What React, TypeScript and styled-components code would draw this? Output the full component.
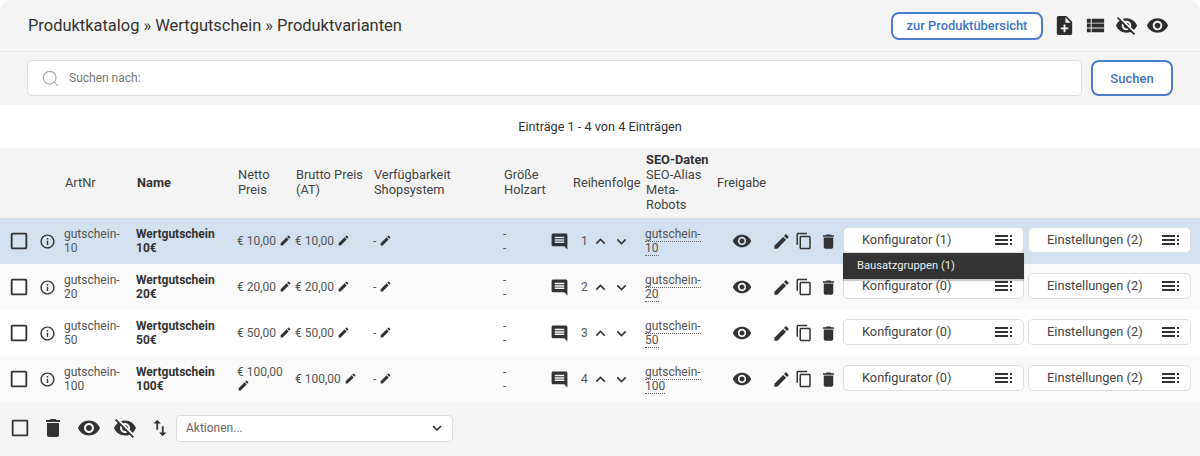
import * as React from "react";
import styled, { createGlobalStyle } from "styled-components";
import { Search } from "lucide-react";
import {
  MdCheckBoxOutlineBlank,
  MdComment,
  MdContentCopy,
  MdDelete,
  MdEdit,
  MdInfoOutline,
  MdKeyboardArrowDown,
  MdKeyboardArrowUp,
  MdNoteAdd,
  MdSwapVert,
  MdViewList,
  MdVisibility,
  MdVisibilityOff,
} from "react-icons/md";

const GlobalStyle = createGlobalStyle`
  html, body { margin: 0; padding: 0; background: #fff; }
  body { font-family: Roboto, "Liberation Sans", sans-serif; color: #333; }
  * { box-sizing: border-box; }
`;

const COLUMNS = "64px 72px 101px 58px 78px 130px 69px 73px 72px 56px 70px 185px 1fr";

const rows = [
  { nr: "10", price: "€ 10,00", pos: 1, konf: 1, tone: "#d3e0ef", open: true },
  { nr: "20", price: "€ 20,00", pos: 2, konf: 0, tone: "#fafafa", open: false },
  { nr: "50", price: "€ 50,00", pos: 3, konf: 0, tone: "#ffffff", open: false },
  { nr: "100", price: "€ 100,00", pos: 4, konf: 0, tone: "#fafafa", open: false },
];

const MenuLines = () => (
  <svg width="18" height="12" viewBox="0 0 18 12" fill="#333">
    <rect x="0" y="1" width="13" height="2" />
    <rect x="0" y="5" width="13" height="2" />
    <rect x="0" y="9" width="13" height="2" />
    <rect x="15" y="1" width="2" height="2" />
    <rect x="15" y="5" width="2" height="2" />
    <rect x="15" y="9" width="2" height="2" />
  </svg>
);

const App = () => {
  return (
    <>
      <GlobalStyle />
      <S.Page>
        <S.Header>
          <S.Title>Produktkatalog » Wertgutschein » Produktvarianten</S.Title>
          <S.HeaderTools>
            <S.OverviewButton>zur Produktübersicht</S.OverviewButton>
            <S.ToolIcons>
              <MdNoteAdd size={23} />
              <MdViewList size={23} />
              <MdVisibilityOff size={23} />
              <MdVisibility size={23} />
            </S.ToolIcons>
          </S.HeaderTools>
        </S.Header>

        <S.SearchBar>
          <S.SearchBox>
            <Search size={19} strokeWidth={1.5} color="#a8a8a8" />
            <span>Suchen nach:</span>
          </S.SearchBox>
          <S.SearchButton>Suchen</S.SearchButton>
        </S.SearchBar>

        <S.Info>Einträge 1 - 4 von 4 Einträgen</S.Info>

        <S.HeadRow>
          <span />
          <S.HeadCell>ArtNr</S.HeadCell>
          <S.HeadCell><b>Name</b></S.HeadCell>
          <S.HeadCell>Netto<br />Preis</S.HeadCell>
          <S.HeadCell>Brutto Preis<br />(AT)</S.HeadCell>
          <S.HeadCell>Verfügbarkeit<br />Shopsystem</S.HeadCell>
          <S.HeadCell>Größe<br />Holzart</S.HeadCell>
          <S.HeadCell>Reihenfolge</S.HeadCell>
          <S.HeadCell><b>SEO-Daten</b><br />SEO-Alias<br />Meta-<br />Robots</S.HeadCell>
          <S.HeadCell>Freigabe</S.HeadCell>
        </S.HeadRow>

        {rows.map((row) => (
          <S.Row key={row.nr} $tone={row.tone}>
            <S.SelectCell>
              <MdCheckBoxOutlineBlank size={22} />
              <MdInfoOutline size={17} />
            </S.SelectCell>
            <S.Cell>gutschein-<br />{row.nr}</S.Cell>
            <S.NameCell>Wertgutschein<br />{row.nr}€</S.NameCell>
            <S.PriceCell>{row.price} <MdEdit size={13} /></S.PriceCell>
            <S.PriceCell>{row.price} <MdEdit size={13} /></S.PriceCell>
            <S.PriceCell>- <MdEdit size={13} /></S.PriceCell>
            <S.SizeCell>
              <span>-<br />-</span>
              <MdComment size={19} />
            </S.SizeCell>
            <S.OrderCell>
              <span>{row.pos}</span>
              <MdKeyboardArrowUp size={19} />
              <MdKeyboardArrowDown size={19} />
            </S.OrderCell>
            <S.Cell><S.Alias>gutschein-<br />{row.nr}</S.Alias></S.Cell>
            <S.ViewCell><MdVisibility size={20} /></S.ViewCell>
            <S.ActionCell>
              <MdEdit size={19} />
              <MdContentCopy size={18} />
              <MdDelete size={19} />
            </S.ActionCell>
            <S.MenuCell>
              <S.MenuButton $wide>
                <span>Konfigurator ({row.konf})</span>
                <MenuLines />
              </S.MenuButton>
              {row.open && <S.Dropdown>Bausatzgruppen (1)</S.Dropdown>}
            </S.MenuCell>
            <S.MenuCell>
              <S.MenuButton>
                <span>Einstellungen (2)</span>
                <MenuLines />
              </S.MenuButton>
            </S.MenuCell>
          </S.Row>
        ))}

        <S.Footer>
          <MdCheckBoxOutlineBlank size={22} />
          <S.FooterTrash><MdDelete size={24} /></S.FooterTrash>
          <MdVisibility size={24} />
          <MdVisibilityOff size={24} />
          <MdSwapVert size={22} />
          <S.ActionSelect>
            <span>Aktionen...</span>
            <MdKeyboardArrowDown size={18} color="#222" />
          </S.ActionSelect>
        </S.Footer>
      </S.Page>
    </>
  );
};

const S = {
  Page: styled.div`
    width: 1200px;
    height: 456px;
    overflow: hidden;
    font-size: 13px;
  `,
  Header: styled.header`
    height: 52px;
    padding: 0 31px 0 28px;
    display: flex;
    align-items: center;
    justify-content: space-between;
    background: #f4f4f4;
    border-bottom: 1px solid #e9e9e9;
    border-radius: 12px 12px 0 0;
  `,
  Title: styled.h1`
    margin: 0;
    font-size: 16.45px;
    font-weight: 400;
    color: #333;
  `,
  HeaderTools: styled.div`
    display: flex;
    align-items: center;
    gap: 10px;
  `,
  OverviewButton: styled.button`
    width: 152px;
    height: 28px;
    padding: 0;
    background: #fff;
    border: 2px solid #4a7dcc;
    border-radius: 8px;
    color: #3f75c9;
    font: 500 12.9px Roboto, sans-serif;
  `,
  ToolIcons: styled.div`
    display: flex;
    align-items: center;
    gap: 8px;
    color: #2d2d2d;
  `,
  SearchBar: styled.div`
    height: 53px;
    padding: 8px 27px 8px 27px;
    display: flex;
    gap: 9px;
    background: #f4f4f4;
  `,
  SearchBox: styled.div`
    flex: 1;
    height: 36px;
    padding: 0 13px;
    display: flex;
    align-items: center;
    gap: 9px;
    background: #fff;
    border: 1px solid #dcdcdc;
    border-radius: 5px;
    font-size: 12px;
    color: #777;
  `,
  SearchButton: styled.button`
    width: 82px;
    height: 36px;
    padding: 0;
    background: #fff;
    border: 2px solid #4a7dcc;
    border-radius: 8px;
    color: #3f75c9;
    font: 500 13px Roboto, sans-serif;
  `,
  Info: styled.div`
    height: 43px;
    display: flex;
    align-items: center;
    justify-content: center;
    font-size: 12.7px;
    color: #333;
  `,
  HeadRow: styled.div`
    height: 70px;
    padding-bottom: 2px;
    display: grid;
    grid-template-columns: ${COLUMNS};
    align-items: center;
    background: #f4f4f4;
    font-size: 12.8px;
    line-height: 15px;
    color: #444;
  `,
  HeadCell: styled.div`
    padding-left: 1px;
    white-space: nowrap;
    b { font-weight: 700; color: #333; }
    &:last-child { padding-left: 0; }
  `,
  Row: styled.div<{ $tone: string }>`
    height: 46px;
    display: grid;
    grid-template-columns: ${COLUMNS};
    align-items: center;
    background: ${(p) => p.$tone};
    line-height: 14px;
    font-size: 12px;
    color: #555;
    svg { color: #333; flex: none; }
  `,
  SelectCell: styled.div`
    padding-left: 8px;
    display: flex;
    align-items: center;
    gap: 9px;
  `,
  Cell: styled.div`
    white-space: nowrap;
  `,
  NameCell: styled.div`
    font-weight: 700;
    color: #333;
    white-space: nowrap;
  `,
  PriceCell: styled.div`
    svg { vertical-align: -2px; }
  `,
  SizeCell: styled.div`
    display: flex;
    align-items: center;
    justify-content: space-between;
    padding-right: 3px;
  `,
  OrderCell: styled.div`
    padding-left: 9px;
    display: flex;
    align-items: center;
    gap: 2px;
    span { margin-right: 1px; }
  `,
  Alias: styled.span`
    border-bottom: 1px dotted #666;
  `,
  ViewCell: styled.div`
    padding-left: 15px;
    display: flex;
  `,
  ActionCell: styled.div`
    margin-left: -1px;
    display: flex;
    align-items: center;
    gap: 4px;
    svg:last-child { margin-left: 2px; }
  `,
  MenuCell: styled.div`
    position: relative;
    margin-top: -2px;
  `,
  MenuButton: styled.div<{ $wide?: boolean }>`
    width: ${(p) => (p.$wide ? "181px" : "163px")};
    height: 26px;
    padding: 0 10px 0 18px;
    display: flex;
    align-items: center;
    justify-content: space-between;
    background: #fff;
    border: 1px solid #dedede;
    border-radius: 5px;
    font-size: 12.8px;
    color: #444;
  `,
  Dropdown: styled.div`
    position: absolute;
    z-index: 2;
    top: 26px;
    left: 0;
    width: 181px;
    height: 26px;
    padding-left: 14px;
    display: flex;
    align-items: center;
    background: #333;
    box-shadow: 0 2px 1px rgba(0, 0, 0, 0.2);
    font-size: 11.2px;
    color: #eee;
  `,
  Footer: styled.div`
    height: 54px;
    padding: 0 0 2px 9px;
    display: flex;
    align-items: center;
    gap: 12px;
    background: #f4f4f4;
    color: #333;
  `,
  FooterTrash: styled.span`
    display: flex;
    margin-left: -2px;
  `,
  ActionSelect: styled.div`
    width: 277px;
    height: 27px;
    margin-left: -7px;
    padding: 0 6px 0 9px;
    display: flex;
    align-items: center;
    justify-content: space-between;
    background: #fff;
    border: 1px solid #dcdcdc;
    border-radius: 4px;
    font-size: 12px;
    color: #666;
  `,
};

export default App;
